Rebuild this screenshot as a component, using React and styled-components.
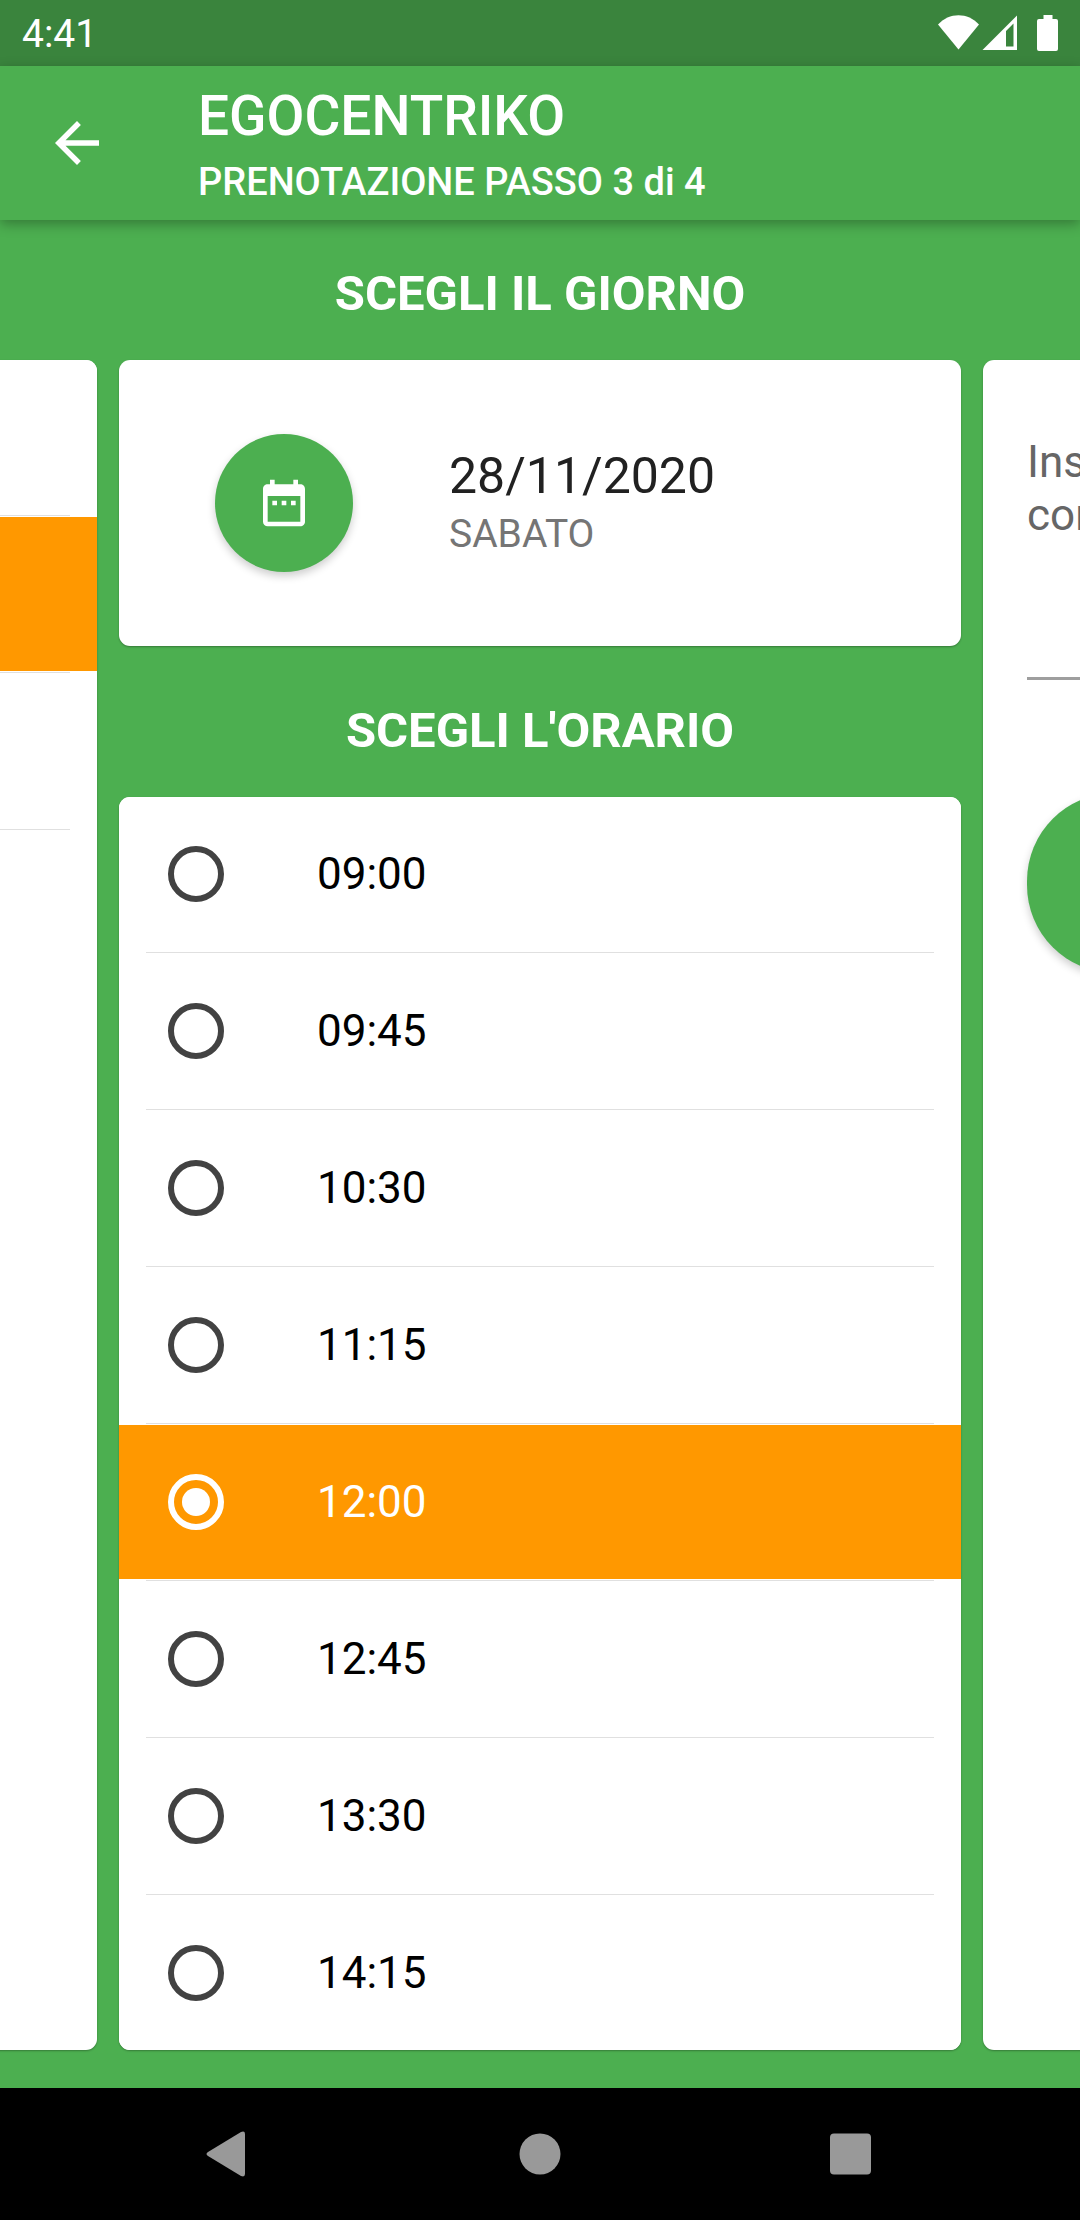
import React, { useState } from 'react';
import styled, { createGlobalStyle } from 'styled-components';
import { MdArrowBack, MdDateRange } from 'react-icons/md';

const GREEN = '#4caf50';
const ORANGE = '#ff9800';

const GlobalStyle = createGlobalStyle`
  * {
    box-sizing: border-box;
  }

  body {
    margin: 0;
    background: ${GREEN};
    font-family: Roboto, 'Liberation Sans', sans-serif;
  }

  button {
    border: none;
    padding: 0;
    cursor: pointer;
  }
`;

const Screen = styled.div`
  min-height: 100vh;
  display: flex;
  flex-direction: column;
  overflow: hidden;
  background: ${GREEN};
`;

const StatusBar = styled.div`
  height: 66px;
  padding: 0 22px;
  display: flex;
  align-items: center;
  justify-content: space-between;
  background: #3a843d;
  color: white;
`;

const Clock = styled.span`
  padding-top: 2px;
  font-size: 39px;
  line-height: 46px;
`;

const AppBar = styled.header`
  position: relative;
  z-index: 1;
  height: 154px;
  padding: 0 44px;
  display: flex;
  align-items: center;
  gap: 88px;
  background: ${GREEN};
  color: white;
  box-shadow: 0 4px 12px rgba(0, 0, 0, 0.3);
`;

const BackButton = styled.button`
  display: flex;
  background: none;
  color: white;
`;

const Titles = styled.div`
  padding-top: 2px;
  display: flex;
  flex-direction: column;
  gap: 11px;
`;

const Title = styled.h1`
  margin: 0;
  font-size: 55px;
  line-height: 66px;
  font-weight: 500;
`;

const Subtitle = styled.p`
  margin: 0;
  font-size: 38px;
  line-height: 45px;
  font-weight: 500;
`;

/* Each step takes 80% of the width, so the neighbours peek in at both sides */
const Pager = styled.main`
  flex: 1;
  display: flex;
  justify-content: center;
  padding-bottom: 27px;
`;

const Step = styled.section`
  flex: 0 0 80%;
  display: flex;
  flex-direction: column;
  padding-top: ${(props) => (props.$untitled ? '129px' : '0')};
`;

const SectionTitle = styled.h2`
  margin: 0;
  padding: 44px 0 25px;
  color: white;
  font-size: 49px;
  line-height: 60px;
  font-weight: 700;
  text-align: center;
`;

const Card = styled.div`
  flex: ${(props) => (props.$fill ? '1' : 'none')};
  margin: 11px;
  border-radius: 11px;
  background: white;
  box-shadow: 0 1px 2px rgba(0, 0, 0, 0.3);
  overflow: hidden;
`;

const DateRow = styled.div`
  height: 286px;
  padding: 0 96px;
  display: flex;
  align-items: center;
  gap: 96px;
`;

const DateButton = styled.button`
  width: 138px;
  height: 138px;
  display: flex;
  align-items: center;
  justify-content: center;
  border-radius: 50%;
  background: ${GREEN};
  color: white;
  box-shadow: 0 4px 8px rgba(0, 0, 0, 0.2);
`;

const DateText = styled.div`
  font-size: 50px;
  line-height: 62px;
  color: #212121;
`;

const DayText = styled.div`
  font-size: 39px;
  line-height: 54px;
  color: #757575;
`;

const Divider = styled.hr`
  height: 3px;
  margin: 0 27px;
  border: solid white;
  border-width: 1px 0;
  background: #e0e0e0;
`;

const Row = styled.label`
  height: 154px;
  padding: 0 49px;
  display: flex;
  align-items: center;
  gap: 93px;
  background: ${(props) => (props.$selected ? ORANGE : 'white')};
  color: ${(props) => (props.$selected ? 'white' : 'black')};
  font-size: 44px;
  line-height: 52px;
  cursor: pointer;
`;

const Radio = styled.input`
  appearance: none;
  width: 56px;
  height: 56px;
  margin: 0;
  display: grid;
  place-items: center;
  border: 6px solid #424242;
  border-radius: 50%;

  &:checked {
    border-color: white;
  }

  &:checked::before {
    content: '';
    width: 28px;
    height: 28px;
    border-radius: 50%;
    background: white;
  }
`;

const ConfirmForm = styled.form`
  padding: 76px 44px;
  display: flex;
  flex-direction: column;
  gap: 113px;
`;

const NoteField = styled.textarea`
  height: 244px;
  padding: 0;
  border: none;
  border-bottom: 3px solid #9e9e9e;
  outline: none;
  resize: none;
  overflow: hidden;
  font: inherit;
  font-size: 44px;
  line-height: 53px;

  &::placeholder {
    color: #666;
  }
`;

const ConfirmButton = styled.button`
  height: 180px;
  border-radius: 88px;
  background: ${GREEN};
  box-shadow: 0 4px 8px rgba(0, 0, 0, 0.2);
`;

const NavBar = styled.nav`
  height: 132px;
  display: flex;
  align-items: center;
  justify-content: center;
  gap: 245px;
  background: black;
`;

const NavButton = styled.button`
  display: flex;
  background: none;
  color: #999;
`;

const times = ['09:00', '09:45', '10:30', '11:15', '12:00', '12:45', '13:30', '14:15'];

// Rows of the previous step, only their right edge is on screen
const previousRows = [false, true, false];

const StatusIcons = () => (
  <svg width="120" height="36" viewBox="0 0 120 36" fill="white" aria-hidden="true">
    <path d="M20.500 34.500 L0 9.500 C11 -3 30 -3 41 9.500 Z" />
    <path fillRule="evenodd" d="M44.500 35 L79 0.500 V35 Z M68 16 V31.500 H75.500 V8.500 Z" />
    <path d="M105.500 0 H114.500 V4 H118 Q120 4 120 6 V34 Q120 36 118 36 H101 Q99 36 99 34 V6 Q99 4 101 4 H105.500 Z" />
  </svg>
);

const App = () => {
  const [selected, setSelected] = useState('12:00');

  return (
    <Screen>
      <GlobalStyle />

      <StatusBar>
        <Clock>4:41</Clock>
        <StatusIcons />
      </StatusBar>

      <AppBar>
        <BackButton aria-label="Indietro">
          <MdArrowBack size={66} />
        </BackButton>
        <Titles>
          <Title>EGOCENTRIKO</Title>
          <Subtitle>PRENOTAZIONE PASSO 3 di 4</Subtitle>
        </Titles>
      </AppBar>

      <Pager>
        <Step $untitled>
          <Card $fill>
            {previousRows.map((active, index) => (
              <React.Fragment key={index}>
                <Row as="div" $selected={active} />
                <Divider />
              </React.Fragment>
            ))}
          </Card>
        </Step>

        <Step>
          <SectionTitle>SCEGLI IL GIORNO</SectionTitle>
          <Card>
            <DateRow>
              <DateButton aria-label="Scegli il giorno">
                <MdDateRange size={56} />
              </DateButton>
              <div>
                <DateText>28/11/2020</DateText>
                <DayText>SABATO</DayText>
              </div>
            </DateRow>
          </Card>

          <SectionTitle>SCEGLI L'ORARIO</SectionTitle>
          <Card $fill>
            {times.map((time, index) => (
              <React.Fragment key={time}>
                {index > 0 && <Divider />}
                <Row $selected={time === selected}>
                  <Radio
                    type="radio"
                    name="time"
                    value={time}
                    checked={time === selected}
                    onChange={() => setSelected(time)}
                  />
                  <span>{time}</span>
                </Row>
              </React.Fragment>
            ))}
          </Card>
        </Step>

        <Step $untitled>
          <Card $fill>
            <ConfirmForm onSubmit={(e) => e.preventDefault()}>
              <NoteField
                aria-label="Nome"
                placeholder={'Inserisci il tuo nome per\nconfermare'}
              />
              <ConfirmButton type="submit" aria-label="Conferma" />
            </ConfirmForm>
          </Card>
        </Step>
      </Pager>

      <NavBar>
        <NavButton aria-label="Indietro">
          <svg width="66" height="66" viewBox="0 0 66 66" fill="currentColor">
            <path d="M12 31 L45 11 Q49 9.500 49 13 V53 Q49 56.500 45 55 L12 35 Q9 33 12 31 Z" />
          </svg>
        </NavButton>
        <NavButton aria-label="Home">
          <svg width="66" height="66" viewBox="0 0 66 66" fill="currentColor">
            <circle cx="33" cy="33" r="20.500" />
          </svg>
        </NavButton>
        <NavButton aria-label="Recenti">
          <svg width="66" height="66" viewBox="0 0 66 66" fill="currentColor">
            <rect x="12" y="12.500" width="41" height="41" rx="4" />
          </svg>
        </NavButton>
      </NavBar>
    </Screen>
  );
};

export default App;
